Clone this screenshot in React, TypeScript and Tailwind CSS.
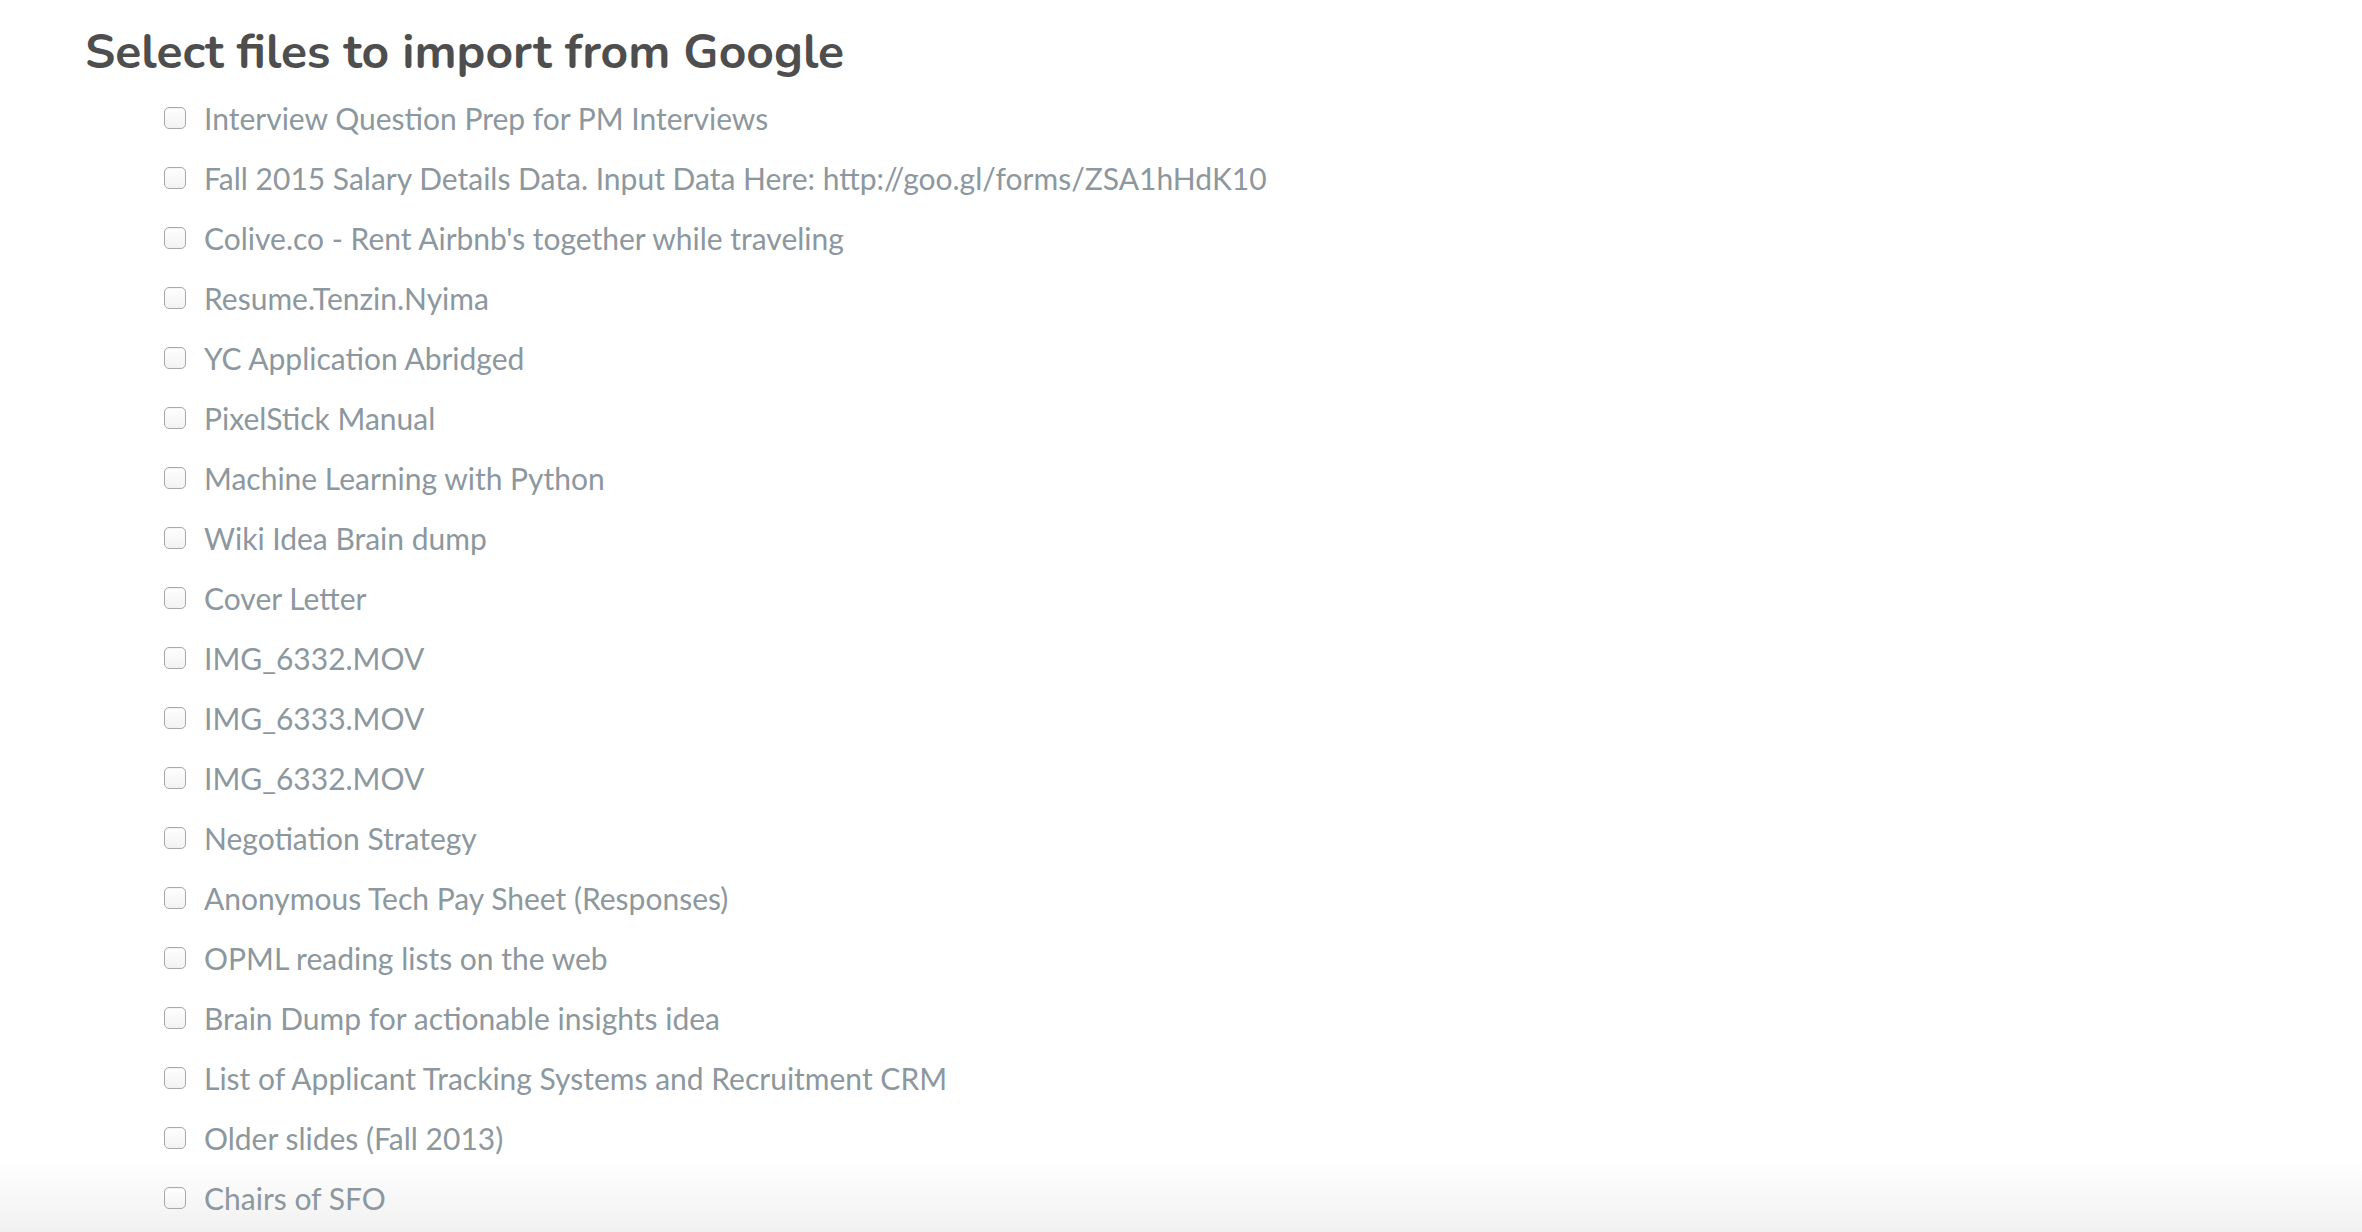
import React from "react";

const files = [
  "Interview Question Prep for PM Interviews",
  "Fall 2015 Salary Details Data. Input Data Here: http://goo.gl/forms/ZSA1hHdK10",
  "Colive.co - Rent Airbnb's together while traveling",
  "Resume.Tenzin.Nyima",
  "YC Application Abridged",
  "PixelStick Manual",
  "Machine Learning with Python",
  "Wiki Idea Brain dump",
  "Cover Letter",
  "IMG_6332.MOV",
  "IMG_6333.MOV",
  "IMG_6332.MOV",
  "Negotiation Strategy",
  "Anonymous Tech Pay Sheet (Responses)",
  "OPML reading lists on the web",
  "Brain Dump for actionable insights idea",
  "List of Applicant Tracking Systems and Recruitment CRM",
  "Older slides (Fall 2013)",
  "Chairs of SFO",
];

export default function App() {
  return (
    <div className="h-[1232px] overflow-hidden bg-[linear-gradient(to_bottom,#ffffff_1160px,#f1f1f1_1232px)] font-['Lato',sans-serif]">
      <h1 className="pl-[85px] pt-[22px] text-[48px] leading-[60px] font-bold text-[#4e4e4e] font-['Nunito','Lato',sans-serif]">
        Select files to import from Google
      </h1>
      <ul className="pl-[164px] pt-[6px]">
        {files.map((f, i) => (
          <li key={i} className="flex h-[60px] items-center">
            <span className="mr-[18px] h-[22px] w-[22px] shrink-0 rounded-[5px] border border-[#a9a9a9] bg-[linear-gradient(to_bottom,#ffffff,#f2f2f2)] shadow-[inset_0_1px_1px_rgba(0,0,0,0.05)]" />
            <span className="text-[30px] leading-none text-[#8c979e]">{f}</span>
          </li>
        ))}
      </ul>
    </div>
  );
}
